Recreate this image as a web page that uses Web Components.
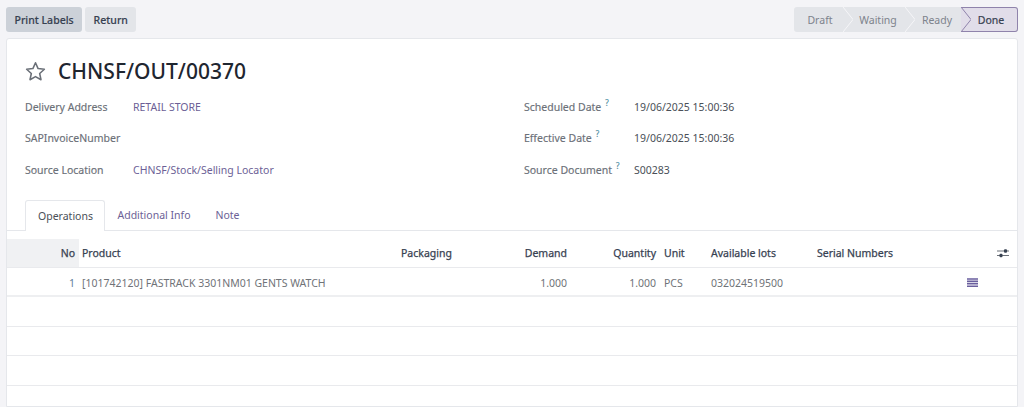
<!DOCTYPE html>
<html>
<head>
<meta charset="utf-8">
<title>CHNSF/OUT/00370</title>
<style>
    html, body { height: 100%; }
    body {
        margin: 0;
        height: 407px;
        overflow: hidden;
        background: #f4f4f7;
        font-family: "Noto Sans", "Open Sans", sans-serif;
        font-size: 10.5px;
        color: #4a4f57;
    }
</style>
</head>
<body>
<picking-form></picking-form>

<script>
const columns = '72px 319px 100px 73px 90px 47px 106px 1fr 59px';

class ActionButton extends HTMLElement {
    constructor() {
        super();
        this.attachShadow({ mode: 'open' });
        this.shadowRoot.innerHTML = `
            <style>
                :host {
                    display: inline-flex;
                    align-items: center;
                    height: 25px;
                    padding: 0 8.5px;
                    border-radius: 3px;
                    background: #e3e5e9;
                    color: #374151;
                    font-weight: 500;
                    -webkit-text-stroke: 0.15px #374151;
                }
                :host([primary]) { background: #ccd1d8; }
            </style>
            <slot></slot>
        `;
    }
}

class StatusBar extends HTMLElement {
    constructor() {
        super();
        this.attachShadow({ mode: 'open' });
        const steps = [['Draft', 49, 3], ['Waiting', 62, 8], ['Ready', 56, 8], ['Done', 57, 4]];
        this.shadowRoot.innerHTML = `
            <style>
                :host { display: flex; height: 25px; background: #e3e5e9; border-radius: 3px; }
                .step {
                    position: relative;
                    display: flex;
                    align-items: center;
                    justify-content: center;
                    box-sizing: border-box;
                    color: #7d838c;
                }
                .step svg { position: absolute; top: 0; right: -10px; width: 10px; height: 25px; z-index: 1; }
                .done {
                    color: #374151;
                    background: #e1dde9;
                    border: 1px solid #8f83ab;
                    border-left: none;
                    border-radius: 0 3px 3px 0;
                    -webkit-text-stroke: 0.2px #374151;
                }
            </style>
            ${steps.map(([label, width, pad], i) => {
                const last = i === steps.length - 1;
                const next = i === steps.length - 2;
                const fill = next ? '#e1dde9' : '#e3e5e9';
                const line = next ? '#8f83ab' : '#f6f6f8';
                return `<div class="step ${last ? 'done' : ''}" style="width:${width}px;padding-left:${pad}px">${label}${last ? '' : `
                    <svg viewBox="0 0 10 25"><path d="M0 0L10 12.5L0 25" fill="${fill}" stroke="${line}" stroke-width="1"/></svg>`}</div>`;
            }).join('')}
        `;
    }
}

class FormField extends HTMLElement {
    constructor() {
        super();
        this.attachShadow({ mode: 'open' });
        this.shadowRoot.innerHTML = `
            <style>
                :host {
                    display: grid;
                    grid-template-columns: var(--label-width, 108px) 1fr;
                    height: 31.5px;
                }
                .label { color: #6b7078; -webkit-text-stroke: 0.15px #6b7078; }
                .value { color: #4a4f57; }
                :host([link]) .value { color: #6c5f96; }
                sup { color: #3d97b0; font-size: 8px; line-height: 0; margin-left: 4px; vertical-align: 5px; }
            </style>
            <div class="label">${this.getAttribute('label')}${this.hasAttribute('help') ? '<sup>?</sup>' : ''}</div>
            <div class="value"><slot></slot></div>
        `;
    }
}

class TabBar extends HTMLElement {
    constructor() {
        super();
        this.attachShadow({ mode: 'open' });
        this.shadowRoot.innerHTML = `
            <style>
                :host {
                    display: flex;
                    height: 30px;
                    padding-left: 18px;
                    border-bottom: 1px solid #e5e7eb;
                }
                .tab {
                    display: flex;
                    align-items: center;
                    height: 30px;
                    padding: 0 12.5px;
                    box-sizing: border-box;
                    color: #6c5f96;
                }
                .active {
                    height: 31px;
                    color: #4a4f57;
                    background: #fff;
                    border: 1px solid #e5e7eb;
                    border-bottom: none;
                    border-radius: 3px 3px 0 0;
                    padding: 0 11px 0 12px;
                }
            </style>
            <div class="tab active">Operations</div>
            <div class="tab">Additional Info</div>
            <div class="tab">Note</div>
        `;
    }
}

class MoveLines extends HTMLElement {
    constructor() {
        super();
        this.attachShadow({ mode: 'open' });
        this.shadowRoot.innerHTML = `
            <style>
                :host { display: block; padding-top: 8px; }
                .row {
                    display: grid;
                    grid-template-columns: ${columns};
                    height: 29px;
                    box-sizing: border-box;
                    border-bottom: 1px solid #e9eaed;
                    align-items: center;
                }
                .row > div { padding: 0 4px 0 3px; min-width: 0; white-space: nowrap; }
                .head { color: #374151; -webkit-text-stroke: 0.25px #374151; }
                .head .no { background: #f0f1f3; height: 100%; display: flex; align-items: center; justify-content: flex-end; box-sizing: border-box; }
                .right { text-align: right; }
                .row > .qty { padding-right: 5px; }
                .body { color: #707378; padding-top: 2px; border-bottom-width: 2px; border-bottom-color: #eeeff1; }
                .body .no { color: #5f7f9b; text-align: right; }
                .empty { height: 29.5px; }
                .options { display: flex; justify-content: flex-end; padding-right: 8px !important; }
                .lots { padding-left: 9px !important; }
                svg { display: block; flex: none; }
            </style>
            <div class="row head">
                <div class="no">No</div>
                <div>Product</div>
                <div>Packaging</div>
                <div class="right">Demand</div>
                <div class="right qty">Quantity</div>
                <div>Unit</div>
                <div>Available lots</div>
                <div>Serial Numbers</div>
                <div class="options">
                    <svg width="12" height="10" viewBox="0 0 12 10"><path d="M0 3h12M0 7.500h12" stroke="#6b7078" stroke-width="1"/><rect x="7" y="1.200" width="3" height="3.600" rx="1" fill="#374151"/><rect x="2.500" y="5.700" width="3" height="3.600" rx="1" fill="#374151"/></svg>
                </div>
            </div>
            <div class="row body">
                <div class="no">1</div>
                <div>[101742120] FASTRACK 3301NM01 GENTS WATCH</div>
                <div></div>
                <div class="right">1.000</div>
                <div class="right qty">1.000</div>
                <div>PCS</div>
                <div>032024519500</div>
                <div></div>
                <div class="lots">
                    <svg width="11" height="9" viewBox="0 0 11 9"><path d="M0 1h11M0 3.400h11M0 5.800h11M0 8.200h11" stroke="#6a5f9e" stroke-width="1.600"/></svg>
                </div>
            </div>
            <div class="row empty"></div>
            <div class="row empty"></div>
            <div class="row empty"></div>
        `;
    }
}

class PickingForm extends HTMLElement {
    constructor() {
        super();
        this.attachShadow({ mode: 'open' });
        this.shadowRoot.innerHTML = `
            <style>
                :host { display: block; }
                .bar {
                    display: flex;
                    justify-content: space-between;
                    padding: 7px 6px 0 6px;
                    height: 38px;
                    box-sizing: border-box;
                }
                .buttons { display: flex; gap: 3px; height: 25px; }
                status-bar { flex: none; }
                .sheet {
                    margin: 0 6px;
                    height: 369px;
                    box-sizing: border-box;
                    background: #fff;
                    border: 1px solid #e5e7eb;
                    border-radius: 3px 3px 0 0;
                    overflow: hidden;
                }
                .title {
                    display: flex;
                    align-items: center;
                    gap: 12px;
                    padding: 8px 18px 0 18px;
                    height: 56px;
                    box-sizing: border-box;
                }
                h1 {
                    margin: 0;
                    font-size: 21px;
                    font-weight: 500;
                    line-height: 26px;
                    color: #1f2630;
                }
                .fields {
                    display: grid;
                    grid-template-columns: 499px 1fr;
                    padding: 4.9px 18px 0 18px;
                    height: 105px;
                    box-sizing: border-box;
                }
                .right { --label-width: 110px; }
            </style>
            <div class="bar">
                <div class="buttons">
                    <action-button primary>Print Labels</action-button>
                    <action-button>Return</action-button>
                </div>
                <status-bar></status-bar>
            </div>
            <div class="sheet">
                <div class="title">
                    <svg width="21" height="20" viewBox="0 0 24 23"><path d="M12 2l3 6.700 7.200.8-5.400 4.900 1.500 7.100L12 17.900l-6.300 3.600 1.500-7.100L1.800 9.500 9 8.700z" fill="none" stroke="#6b7078" stroke-width="1.800" stroke-linejoin="round"/></svg>
                    <h1>CHNSF/OUT/00370</h1>
                </div>
                <div class="fields">
                    <div>
                        <form-field label="Delivery Address" link>RETAIL STORE</form-field>
                        <form-field label="SAPInvoiceNumber"></form-field>
                        <form-field label="Source Location" link>CHNSF/Stock/Selling Locator</form-field>
                    </div>
                    <div class="right">
                        <form-field label="Scheduled Date" help>19/06/2025 15:00:36</form-field>
                        <form-field label="Effective Date" help>19/06/2025 15:00:36</form-field>
                        <form-field label="Source Document" help>S00283</form-field>
                    </div>
                </div>
                <tab-bar></tab-bar>
                <move-lines></move-lines>
            </div>
        `;
    }
}

customElements.define('action-button', ActionButton);
customElements.define('status-bar', StatusBar);
customElements.define('form-field', FormField);
customElements.define('tab-bar', TabBar);
customElements.define('move-lines', MoveLines);
customElements.define('picking-form', PickingForm);
</script>
</body>
</html>
